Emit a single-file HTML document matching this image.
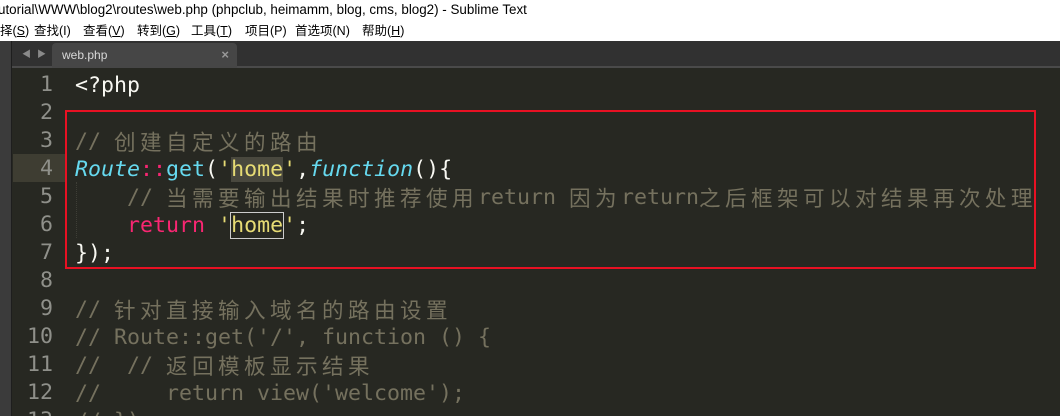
<!DOCTYPE html>
<html><head><meta charset="utf-8"><style>
*{margin:0;padding:0;box-sizing:border-box}
html,body{width:1060px;height:416px;overflow:hidden}
body{background:#272822;position:relative;font-family:"Liberation Sans","Noto Sans CJK SC",sans-serif}
.title{position:absolute;top:0;width:1062px;height:20px;background:#fff;font-size:13.4px;color:#000;line-height:20px;white-space:nowrap;left:-2px}
.menu{position:absolute;left:0;top:20px;width:1060px;height:21px;background:#fff;font-size:12.5px;color:#000;line-height:22px;white-space:nowrap}
.menu span{position:absolute}
.tabbar{position:absolute;left:12px;top:41px;width:1048px;height:27px;background:#313131;border-bottom:2px solid #4a4a4a}
.strip{position:absolute;left:0;top:41px;width:12px;height:375px;background:#3b3b3b;border-right:1px solid #1e1e1e}
.tab{position:absolute;left:40px;top:2px;width:185px;height:25px;background:#464646;border-radius:4px 4px 0 0;color:#d8d8d8;font-size:12px;line-height:24px;padding-left:10px}
.tab b{position:absolute;right:8px;top:0;color:#999;font-size:13px}
.arr{position:absolute;top:6px;color:#8a8a8a;font-size:9px}
.l{position:absolute;left:0;width:1060px;height:28px;line-height:28px;white-space:pre}
.n{position:absolute;left:12px;top:1px;width:41px;text-align:right;color:#8f908a;font-family:"DejaVu Sans Mono",monospace;font-size:21.6px}
.t{position:absolute;left:75px;top:2px;font-family:"DejaVu Sans Mono","Noto Sans CJK SC",monospace;font-size:21.6px;color:#f8f8f2;line-height:28px;height:28px}
.c{color:#75715e}.k{color:#f92672}.f{color:#66d9ef}.i{color:#66d9ef;font-style:italic}.s{color:#e6db74}
.z{font-family:"Noto Sans CJK SC",sans-serif;letter-spacing:4.4px;font-size:21.6px;line-height:28px;vertical-align:top}
.cur{position:absolute;left:13px;top:154px;width:52px;height:28px;background:#3e3d32}
.red{position:absolute;left:65px;top:110px;width:971px;height:159px;border:2px solid #e81123}
.guide{position:absolute;left:76px;top:182px;height:56px;border-left:1px dotted #3e3e36}
</style></head><body>
<div class="title">utorial\WWW\blog2\routes\web.php (phpclub, heimamm, blog, cms, blog2) - Sublime Text</div>
<div class="menu"><span style="left:0">择(<u>S</u>)</span><span style="left:34px">查找(I)</span><span style="left:83px">查看(<u>V</u>)</span><span style="left:137px">转到(<u>G</u>)</span><span style="left:191px">工具(<u>T</u>)</span><span style="left:245px">项目(P)</span><span style="left:295px">首选项(N)</span><span style="left:362px">帮助(<u>H</u>)</span></div>
<div class="strip"></div>
<div class="tabbar"><span class="arr" style="left:10px">◀</span><span class="arr" style="left:25px">▶</span><div class="tab">web.php<b>×</b></div></div>
<div class="cur"></div>
<div class="guide"></div>
<div class="l" style="top:70px"><span class="n">1</span><span class="t">&lt;?php</span></div>
<div class="l" style="top:98px"><span class="n">2</span></div>
<div class="l" style="top:126px"><span class="n">3</span><span class="t"><span class="c">// <span class="z">创建自定义的路由</span></span></span></div>
<div class="l" style="top:154px"><span class="n">4</span><span class="t"><span class="i">Route</span><span class="k">::</span><span class="f">get</span>(<span class="s">'<span style="background:#49483e">home</span>'</span>,<span class="i">function</span>(){</span></div>
<div class="l" style="top:182px"><span class="n">5</span><span class="t">    <span class="c">// <span class="z">当需要输出结果时推荐使用</span>return <span class="z">因为</span>return<span class="z">之后框架可以对结果再次处理</span></span></span></div>
<div class="l" style="top:210px"><span class="n">6</span><span class="t">    <span class="k">return</span> <span class="s">'<span style="outline:1px solid #ccc">home</span>'</span>;</span></div>
<div class="l" style="top:238px"><span class="n">7</span><span class="t">});</span></div>
<div class="l" style="top:266px"><span class="n">8</span></div>
<div class="l" style="top:294px"><span class="n">9</span><span class="t"><span class="c">// <span class="z">针对直接输入域名的路由设置</span></span></span></div>
<div class="l" style="top:322px"><span class="n">10</span><span class="t"><span class="c">// Route::get('/', function () {</span></span></div>
<div class="l" style="top:350px"><span class="n">11</span><span class="t"><span class="c">//  // <span class="z">返回模板显示结果</span></span></span></div>
<div class="l" style="top:378px"><span class="n">12</span><span class="t"><span class="c">//     return view('welcome');</span></span></div>
<div class="l" style="top:406px"><span class="n">13</span><span class="t"><span class="c">// });</span></span></div>
<div class="red"></div>
</body></html>
